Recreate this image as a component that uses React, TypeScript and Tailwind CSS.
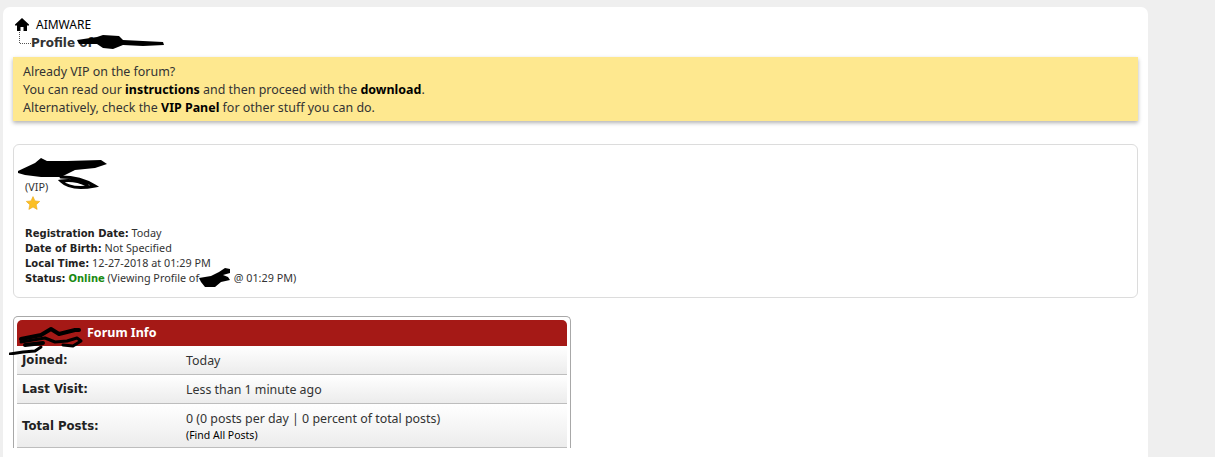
const font = "font-['Noto_Sans','Open_Sans',sans-serif]";
const boldFont = "font-['DejaVu_Sans',sans-serif] font-bold";

function Row({ label, children, h, labelClass = "" }: { label: string; children: React.ReactNode; h: string; labelClass?: string }) {
  return (
    <div className={`flex items-center border-b border-[#bdbdbd] bg-gradient-to-b from-white to-[#ececec] ${h}`}>
      <div className={`w-[169px] shrink-0 pl-[5px] pt-[2px] text-[11.7px] text-[#222] ${boldFont} ${labelClass}`}>{label}</div>
      <div className="text-[12.4px] leading-[15px] text-[#333]">{children}</div>
    </div>
  );
}

export default function App() {
  return (
    <div className={`h-[457px] w-[1215px] overflow-hidden bg-[#efefef] pl-[3px] pt-[7px] ${font}`}>
      <div className="h-[460px] w-[1145px] rounded-t-[7px] bg-white px-[10px]">
        <div className="relative h-[50px] pt-[11px]">
          <div className="flex items-center">
            <svg className="ml-[2px] mt-[-1px] h-[13px] w-[14px]" viewBox="0 0 14 13">
              <path d="M7 0 L14 6.5 L14 7.5 L12 7.5 L12 13 L8.5 13 L8.5 9 L5.5 9 L5.5 13 L2 13 L2 7.5 L0 7.5 L0 6.5 Z" fill="#000" />
            </svg>
            <span className="ml-[7px] text-[12px] leading-[14px] text-black">AIMWARE</span>
          </div>
          <div className="flex h-[19px] items-start">
            <svg className="ml-[6px] h-[12px] w-[12px]" viewBox="0 0 12 12" fill="none" stroke="#555" strokeDasharray="1 1">
              <path d="M0.5 0 V11.5 H12" />
            </svg>
            <span className={`mt-[3px] text-[12px] leading-[17px] text-[#333] ${boldFont}`}>Profile of</span>
          </div>
          <svg className="absolute left-[60px] top-[27px] h-[16px] w-[92px]" viewBox="0 0 92 16">
            <path d="M4 6 L24 3 L30 1 L46 2 L50 6 L70 7 L90 8 L91 11 L70 12 L50 11 L40 15 L30 14 L24 10 L6 10 Z" fill="#000" />
          </svg>
        </div>

        <div className="h-[64px] bg-[#fee88f] pl-[10px] pt-[6px] text-[12.45px] leading-[18px] text-[#333] shadow-[0_2px_4px_rgba(0,0,0,0.3)]">
          <div>Already VIP on the forum?</div>
          <div>
            You can read our <b className="text-black">instructions</b> and then proceed with the{" "}
            <b className="text-black">download</b>.
          </div>
          <div>
            Alternatively, check the <b className="text-black">VIP Panel</b> for other stuff you can do.
          </div>
        </div>

        <div className="relative mt-[23px] h-[154px] rounded-[6px] border border-[#dcdcdc] pl-[11px] pt-[35px] text-[10.8px] text-[#333]">
          <svg className="absolute left-[3px] top-[12px] h-[32px] w-[92px]" viewBox="0 0 92 32" fill="none">
            <path d="M1 14 L18 6 L24 1 L30 4 L50 4 L84 3 L90 7 L78 11 L58 13 L44 20 L24 20 L8 18 L1 16 Z" fill="#000" />
            <path d="M44 20 C58 20 70 24 78 29 C62 32 50 30 44 24 C56 22 64 25 70 28" stroke="#000" strokeWidth="3" strokeLinecap="round" />
          </svg>
          <div className="leading-[14px]">(VIP)</div>
          <svg className="mb-[2px] ml-[1px] mt-[2px] h-[14px] w-[14px]" viewBox="0 0 24 24">
            <path d="M12 1 L15.4 8.4 L23.5 9.3 L17.5 14.8 L19.1 23 L12 18.9 L4.9 23 L6.5 14.8 L0.5 9.3 L8.6 8.4 Z" fill="#fbbf24" stroke="#eaa60f" strokeWidth="1" />
          </svg>
          <div className="mt-[15px] leading-[15px]">
            <div className="h-[15px]"><span className={`text-[10px] text-[#222] ${boldFont}`}>Registration Date:</span> Today</div>
            <div className="h-[15px]"><span className={`text-[10px] text-[#222] ${boldFont}`}>Date of Birth:</span> Not Specified</div>
            <div className="h-[15px]"><span className={`text-[10px] text-[#222] ${boldFont}`}>Local Time:</span> 12-27-2018 at 01:29 PM</div>
            <div className="relative h-[15px]">
              <span className={`text-[10px] text-[#222] ${boldFont}`}>Status:</span>{" "}
              <span className={`text-[10px] text-[#1a8a12] ${boldFont}`}>Online</span> (Viewing Profile of{" "}
              <span className="inline-block w-[29px]" /> @ 01:29 PM)
              <svg className="absolute left-[172px] top-[-3px] h-[21px] w-[34px]" viewBox="0 0 34 21" fill="none">
                <path d="M2 11 L14 9 L22 5 L28 1 L33 2 L33 6 L26 8 L31 10 L33 13 L24 15 L18 20 L8 20 L4 15 Z" fill="#000" />
              </svg>
            </div>
          </div>
        </div>

        <div className="relative mt-[18px] w-[558px] rounded-t-[5px] border border-b-0 border-[#a8a8a8] px-[3px] pt-[3px]">
          <div className="h-[26px] rounded-t-[5px] bg-[#a51916] pl-[70px] text-[12.5px] font-bold leading-[26px] text-white">Forum Info</div>
          <svg className="absolute left-[-5px] top-[8px] h-[30px] w-[78px]" viewBox="0 0 78 30" fill="none" stroke="#000" strokeLinecap="round" strokeLinejoin="round">
            <path d="M12 14 L32 10 L42 4 L50 9 L66 5 L70 5" strokeWidth="4" />
            <path d="M12 17 L36 13 L46 17 L58 16 L68 13 L72 16 L64 21 L54 20" strokeWidth="3" />
            <path d="M1 29 L14 27 L26 26 L32 22" strokeWidth="3" />
            <path d="M16 20 L34 18" strokeWidth="4" />
          </svg>
          <Row label="Joined:" h="h-[29px]">Today</Row>
          <Row label="Last Visit:" h="h-[29px]">Less than 1 minute ago</Row>
          <Row label="Total Posts:" h="h-[44px]">
            <div className="pt-[2px]">0 (0 posts per day | 0 percent of total posts)</div>
            <div className="mt-[2px] text-[10.5px] text-black">(Find All Posts)</div>
          </Row>
        </div>
      </div>
    </div>
  );
}
